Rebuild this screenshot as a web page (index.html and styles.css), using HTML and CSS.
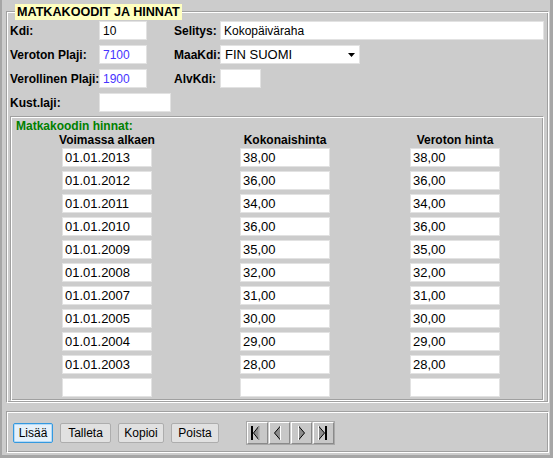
FILE: index.html
```html
<!DOCTYPE html>
<html lang="fi">
<head>
<meta charset="utf-8">
<title>Matkakoodit ja hinnat</title>
<link rel="stylesheet" href="styles.css">
</head>
<body>
<div class="window">
  <section class="group main">
    <div class="title">MATKAKOODIT JA HINNAT</div>
    <div class="form">
      <label class="lbl">Kdi:</label><input class="field w48" value="10"><label class="lbl">Selitys:</label><input class="field wide" value="Kokopäiväraha">
      <label class="lbl">Veroton Plaji:</label><input class="field w48 blue" value="7100"><label class="lbl">MaaKdi:</label>
      <div class="select"><span>FIN SUOMI</span><svg class="arrow" width="7" height="4" viewBox="0 0 7 4"><path d="M0 0H7L3.5 4Z" fill="#000"/></svg></div>
      <label class="lbl">Verollinen Plaji:</label><input class="field w48 blue" value="1900"><label class="lbl">AlvKdi:</label><input class="field w41" value="">
      <label class="lbl">Kust.laji:</label><input class="field w72" value="">
    </div>
    <div class="group prices">
      <div class="prices-title">Matkakoodin hinnat:</div>
      <div class="cols">
        <div class="col c1">
          <div class="hdr">Voimassa alkaen</div>
          <input class="cell" value="01.01.2013"><input class="cell" value="01.01.2012"><input class="cell" value="01.01.2011"><input class="cell" value="01.01.2010"><input class="cell" value="01.01.2009"><input class="cell" value="01.01.2008"><input class="cell" value="01.01.2007"><input class="cell" value="01.01.2005"><input class="cell" value="01.01.2004"><input class="cell" value="01.01.2003"><input class="cell" value="">
        </div>
        <div class="col c2">
          <div class="hdr">Kokonaishinta</div>
          <input class="cell" value="38,00"><input class="cell" value="36,00"><input class="cell" value="34,00"><input class="cell" value="36,00"><input class="cell" value="35,00"><input class="cell" value="32,00"><input class="cell" value="31,00"><input class="cell" value="30,00"><input class="cell" value="29,00"><input class="cell" value="28,00"><input class="cell" value="">
        </div>
        <div class="col c3">
          <div class="hdr">Veroton hinta</div>
          <input class="cell" value="38,00"><input class="cell" value="36,00"><input class="cell" value="34,00"><input class="cell" value="36,00"><input class="cell" value="35,00"><input class="cell" value="32,00"><input class="cell" value="31,00"><input class="cell" value="30,00"><input class="cell" value="29,00"><input class="cell" value="28,00"><input class="cell" value="">
        </div>
      </div>
    </div>
  </section>
  <div class="group toolbar">
    <button class="btn b-lisaa focus">Lisää</button>
    <button class="btn b-talleta">Talleta</button>
    <button class="btn b-kopioi">Kopioi</button>
    <button class="btn b-poista">Poista</button>
    <div class="nav">
      <span class="navbtn"><svg width="21" height="22" viewBox="0 0 21 22"><rect x="4" y="4" width="2" height="14" fill="#000"/><path d="M12 4L6.5 11L12 18Z" fill="#8c8c8c" stroke="#000" stroke-width="1"/><path d="M12 4V18" stroke="#fff" stroke-width="1"/></svg></span>
      <span class="navbtn"><svg width="21" height="22" viewBox="0 0 21 22"><path d="M11.5 4L5.5 11L11.5 18Z" fill="#8c8c8c" stroke="#000" stroke-width="1"/><path d="M11.5 4V18" stroke="#fff" stroke-width="1"/></svg></span>
      <span class="navbtn"><svg width="21" height="22" viewBox="0 0 21 22"><path d="M7.5 4L13.5 11L7.5 18Z" fill="#8c8c8c" stroke="#000" stroke-width="1"/><path d="M7.5 4V18" stroke="#fff" stroke-width="1"/></svg></span>
      <span class="navbtn"><svg width="21" height="22" viewBox="0 0 21 22"><path d="M5.5 4L11.5 11L5.5 18Z" fill="#8c8c8c" stroke="#000" stroke-width="1"/><path d="M5.5 4V18" stroke="#fff" stroke-width="1"/><rect x="12" y="4" width="2" height="14" fill="#000"/></svg></span>
    </div>
  </div>
</div>
</body>
</html>
```

FILE: styles.css
```css
html, body {
  margin: 0;
  padding: 0;
  background: #cccccc;
}
body {
  font-family: "Liberation Sans", Arial, sans-serif;
  font-size: 12px;
  color: #000;
}
.window {
  width: 553px;
  height: 458px;
  box-sizing: border-box;
  border-left: 2px solid #a6a6a6;
  border-right: 3px solid #a6a6a6;
  border-bottom: 3px solid #a6a6a6;
  padding-left: 4px;
  padding-top: 11px;
  overflow: hidden;
}
/* 2px groove: outer 1px border + inner 1px inset shadow */
.group {
  box-sizing: border-box;
  border: 1px solid;
  border-color: #a0a0a0 #ffffff #ffffff #a0a0a0;
  box-shadow: inset 1px 1px 0 #ffffff, inset -1px -1px 0 #a0a0a0;
}
.main {
  width: 543px;
  padding: 1px 1px 1px 1px;
}
.title {
  width: fit-content;
  margin: -9px 0 0 7px;
  padding: 1px 2px 1px 2px;
  background: #ffffc0;
  font-weight: bold;
  font-size: 12.6px;
  line-height: 14px;
  color: #000;
  white-space: nowrap;
}
.form {
  margin-top: 1px;
  padding: 0 3px 0 2px;
  display: grid;
  grid-template-columns: 89px 75px 46px 1fr;
  grid-auto-rows: 19px;
  row-gap: 5px;
  align-items: center;
}
.lbl {
  font-weight: bold;
  font-size: 12px;
  white-space: nowrap;
}
.field, .cell, .select {
  box-sizing: border-box;
  height: 19px;
  margin: 0;
  border: 1px solid #e2e2e2;
  background: #ffffff;
  font-family: "Liberation Sans", Arial, sans-serif;
  font-size: 12px;
  color: #000;
  padding: 0 3px;
  outline: none;
}
.w48 { width: 48px; }
.w41 { width: 41px; }
.w72 { width: 72px; }
.wide { width: 100%; }
.blue { color: #4633ff; }
.select {
  width: 140px;
  display: flex;
  align-items: center;
  justify-content: space-between;
  padding: 0 4px 0 4px;
  font-size: 13px;
}
.arrow { display: block; }
.prices {
  margin: 4px 3px 0 2px;
  padding: 2px 1px 3px 1px;
}
.prices-title {
  padding-left: 4px;
  color: #008000;
  font-weight: bold;
  font-size: 12px;
  line-height: 14px;
}
.cols {
  display: flex;
  padding-left: 50px;
}
.col {
  width: 90px;
  display: flex;
  flex-direction: column;
  align-items: center;
  gap: 4px;
}
.c2 { margin-left: 88px; }
.c3 { margin-left: 80px; }
.hdr {
  font-weight: bold;
  font-size: 12px;
  line-height: 14px;
  white-space: nowrap;
  margin-bottom: -3px;
}
.cell {
  width: 90px;
  font-size: 13px;
  padding: 0 2px;
}
.toolbar {
  margin-top: 8px;
  width: 543px;
  height: 42px;
  display: flex;
  align-items: center;
  gap: 7px;
  padding: 3px 1px 1px 6px;
}
.btn {
  box-sizing: border-box;
  height: 20px;
  margin: 0;
  padding: 0;
  border: 1px solid #adadad;
  border-radius: 2px;
  background: #e1e1e1;
  font-family: "Liberation Sans", Arial, sans-serif;
  font-size: 12px;
  color: #000;
  text-align: center;
}
.b-lisaa { width: 40px; }
.b-talleta { width: 51px; }
.b-kopioi { width: 46px; }
.b-poista { width: 48px; }
.btn.focus {
  border-color: #3399e0;
  background: #e5f1fb;
  box-shadow: inset 0 0 0 1px #b5d9f5;
}
.nav {
  margin-left: 20px;
  display: flex;
  gap: 1px;
  border: 1px solid #a8a8a8;
}
.navbtn {
  display: block;
  width: 21px;
  height: 22px;
  box-sizing: border-box;
  border: 1px solid;
  border-color: #ffffff #8a8a8a #8a8a8a #ffffff;
  background: #c8c8c8;
  overflow: hidden;
}
.navbtn svg { display: block; margin: -1px; }
```
